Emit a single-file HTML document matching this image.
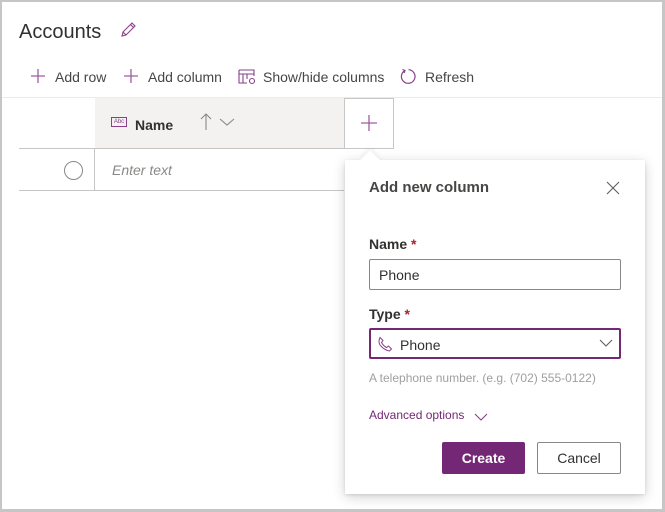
<!DOCTYPE html>
<html><head><meta charset="utf-8"><style>
*{box-sizing:border-box;margin:0;padding:0}
body{width:665px;height:512px;overflow:hidden;background:#fff;font-family:"Liberation Sans",sans-serif;position:relative}
.frame{position:absolute;left:0;top:0;width:665px;height:512px;border-style:solid;border-color:#c6c6c6;border-width:2px 3px 3px 2px}
.abs{position:absolute}
.t{color:#323130;font-size:14px}
</style></head><body>
<div class="frame"></div>
<div class="abs" style="left:19px;top:21px;font-size:20px;color:#323130">Accounts</div>
<svg class="abs" style="left:119px;top:21px" width="18" height="18" viewBox="0 0 18 18"><path d="M3 15 L4 11 L13 2 L16 5 L7 14 Z M11.5 3.5 L14.5 6.5 M4 11 L7 14" fill="none" stroke="#8a3f8a" stroke-width="1.1"/></svg>

<svg class="abs" style="left:30px;top:68px" width="16" height="16"><path d="M8 1V15M1 8H15" stroke="#a05ca0" stroke-width="1.3"/></svg>
<div class="abs t" style="left:55px;top:69px;color:#484644">Add row</div>
<svg class="abs" style="left:123px;top:68px" width="16" height="16"><path d="M8 1V15M1 8H15" stroke="#a05ca0" stroke-width="1.3"/></svg>
<div class="abs t" style="left:148px;top:69px;color:#484644">Add column</div>
<svg class="abs" style="left:238px;top:69px" width="18" height="16"><path d="M1 1H16V7M1 1V14H9M1 5H16M5 5V14M9 5V10" fill="none" stroke="#8a3f8a" stroke-width="1.1"/><circle cx="14" cy="12" r="2.5" fill="none" stroke="#8a3f8a" stroke-width="1.1"/></svg>
<div class="abs t" style="left:263px;top:69px;color:#484644">Show/hide columns</div>
<svg class="abs" style="left:400px;top:68px" width="17" height="17"><path d="M5 2.5 A6.8 6.8 0 1 0 8.5 1.7" fill="none" stroke="#8a3f8a" stroke-width="1.2"/><path d="M2.5 1.5 L5 2.5 L4 5" fill="none" stroke="#8a3f8a" stroke-width="1.2"/></svg>
<div class="abs t" style="left:425px;top:69px;color:#484644">Refresh</div>

<div class="abs" style="left:2px;top:97px;width:660px;height:1px;background:#edebe9"></div>
<div class="abs" style="left:95px;top:98px;width:249px;height:50px;background:#f3f2f1"></div>
<div class="abs" style="left:19px;top:148px;width:325px;height:1px;background:#c8c6c4"></div>
<div class="abs" style="left:19px;top:190px;width:325px;height:1px;background:#c8c6c4"></div>
<div class="abs" style="left:94px;top:149px;width:1px;height:41px;background:#c8c6c4"></div>
<div class="abs" style="left:111px;top:117px;width:16px;height:10px;border:1px solid #8a3f8a;font-size:6px;color:#8a3f8a;line-height:8px;text-align:center">Abc</div>
<div class="abs t" style="left:135px;top:117px;font-weight:bold">Name</div>
<svg class="abs" style="left:198px;top:112px" width="40" height="20"><path d="M8 2V18M3 7L8 2L13 7" fill="none" stroke="#8a8886" stroke-width="1.1"/><path d="M22 7L29 13L36 7" fill="none" stroke="#8a8886" stroke-width="1.1"/></svg>
<div class="abs" style="left:344px;top:98px;width:50px;height:51px;border:1px solid #c8c6c4;background:#fff"></div>
<svg class="abs" style="left:361px;top:115px" width="16" height="16"><path d="M8 0V16M0 8H16" stroke="#a05ca0" stroke-width="1.3"/></svg>
<div class="abs" style="left:64px;top:161px;width:19px;height:19px;border:1px solid #8a8886;border-radius:50%"></div>
<div class="abs" style="left:112px;top:162px;font-size:14px;font-style:italic;color:#8a8886">Enter text</div>

<div class="abs" style="left:345px;top:160px;width:300px;height:334px;background:#fff;box-shadow:0 3px 12px rgba(0,0,0,.18),0 1px 3px rgba(0,0,0,.1)"></div>
<div class="abs" style="left:363px;top:153px;width:14px;height:14px;background:#fff;transform:rotate(45deg);box-shadow:-2px -2px 4px rgba(0,0,0,.06)"></div>
<div class="abs" style="left:345px;top:160px;width:40px;height:10px;background:#fff"></div>
<div class="abs" style="left:369px;top:179px;font-size:15px;font-weight:bold;color:#484644">Add new column</div>
<svg class="abs" style="left:606px;top:181px" width="14" height="14"><path d="M1 1L13 13M13 1L1 13" stroke="#605e5c" stroke-width="1.1"/></svg>
<div class="abs t" style="left:369px;top:236px;font-weight:bold">Name <span style="color:#a4262c">*</span></div>
<div class="abs" style="left:369px;top:259px;width:252px;height:31px;border:1px solid #8a8886;border-radius:2px;font-size:14px;color:#323130;padding:7px 9px">Phone</div>
<div class="abs t" style="left:369px;top:306px;font-weight:bold">Type <span style="color:#a4262c">*</span></div>
<div class="abs" style="left:369px;top:328px;width:252px;height:31px;border:2px solid #742774;border-radius:2px"></div>
<svg class="abs" style="left:377px;top:336px" width="16" height="16"><path d="M3 1.5 L6 4.5 L4.5 6.5 Q6.5 10 9.5 11.5 L11.5 10 L14.5 13 L12.5 15 Q7 14 3 9 Q1 5.5 3 1.5Z" fill="none" stroke="#8a3f8a" stroke-width="1"/></svg>
<div class="abs t" style="left:400px;top:337px">Phone</div>
<svg class="abs" style="left:599px;top:338px" width="14" height="10"><path d="M1 2L7 8L13 2" fill="none" stroke="#605e5c" stroke-width="1.1"/></svg>
<div class="abs" style="left:369px;top:371px;font-size:12px;color:#a19f9d">A telephone number. (e.g. (702) 555-0122)</div>
<div class="abs" style="left:369px;top:408px;font-size:12px;color:#742774">Advanced options</div>
<svg class="abs" style="left:474px;top:412px" width="14" height="10"><path d="M1 2L7 8L13 2" fill="none" stroke="#8a3f8a" stroke-width="1.1"/></svg>
<div class="abs" style="left:442px;top:442px;width:83px;height:32px;background:#742774;border-radius:2px;color:#fff;font-size:14px;font-weight:bold;text-align:center;line-height:32px">Create</div>
<div class="abs" style="left:537px;top:442px;width:84px;height:32px;border:1px solid #8a8886;border-radius:2px;color:#323130;font-size:14px;text-align:center;line-height:30px">Cancel</div>
</body></html>
